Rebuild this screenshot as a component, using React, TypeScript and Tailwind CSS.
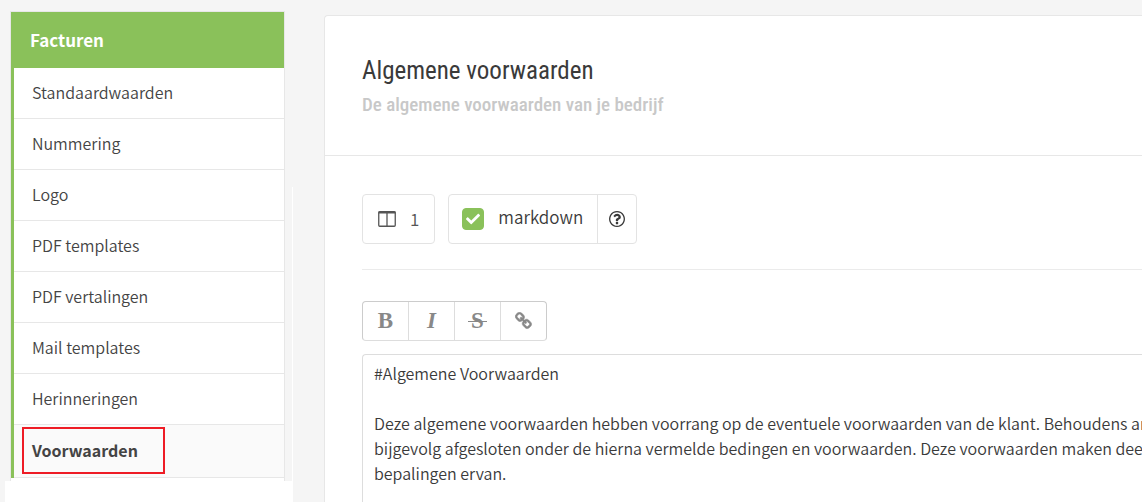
import React, { useState } from "react";
import { FaCheck } from "react-icons/fa";

const menuItems = [
  "Standaardwaarden",
  "Nummering",
  "Logo",
  "PDF templates",
  "PDF vertalingen",
  "Mail templates",
  "Herinneringen",
  "Voorwaarden",
];

const terms = `#Algemene Voorwaarden

Deze algemene voorwaarden hebben voorrang op de eventuele voorwaarden van de klant. Behoudens and
bijgevolg afgesloten onder de hierna vermelde bedingen en voorwaarden. Deze voorwaarden maken deel
bepalingen ervan.`;

const ColumnsIcon = () => (
  <svg viewBox="0 0 18 16" className="h-4 w-[18px]" aria-hidden="true">
    <rect x="0.75" y="0.75" width="16.5" height="14.5" rx="1" fill="none" stroke="currentColor" strokeWidth="1.3" />
    <path d="M0.5 0.5h17v2h-17z" fill="currentColor" />
    <path d="M9 2v13" stroke="currentColor" strokeWidth="1.3" />
  </svg>
);

const HelpIcon = () => (
  <svg viewBox="128 128 1536 1536" className="h-4 w-4" fill="currentColor" aria-hidden="true">
    <path d="M1008 1200v160q0 14-9 23t-23 9h-160q-14 0-23-9t-9-23v-160q0-14 9-23t23-9h160q14 0 23 9t9 23zm256-496q0 50-15 90t-45.5 69-52 44-59.5 36q-32 18-46.5 28t-26 24-11.5 29v32q0 14-9 23t-23 9h-160q-14 0-23-9t-9-23v-68q0-35 10.5-64.5t24-47.5 39-35.5 41-25.5 44.5-21q53-25 75-43t22-49q0-42-43.5-71.5t-95.5-29.5q-56 0-95 27-29 20-80 83-9 12-25 12-11 0-19-6l-108-82q-10-7-12-20t5-23q122-192 349-192 129 0 238.5 89.5t109.5 214.5zm-368-448q-130 0-248.5 51t-204 136.5-136.5 204-51 248.5 51 248.5 136.5 204 204 136.5 248.5 51 248.5-51 204-136.5 136.5-204 51-248.5-51-248.5-136.5-204-204-136.5-248.5-51zm768 640q0 209-103 385.5t-279.5 279.5-385.5 103-385.5-103-279.5-279.5-103-385.5 103-385.5 279.5-279.5 385.5-103 385.5 103 279.5 279.5 103 385.5z" />
  </svg>
);

const LinkIcon = () => (
  <svg
    viewBox="0 0 1792 1792"
    className="h-[18px] w-[18px]"
    fill="currentColor"
    stroke="currentColor"
    strokeWidth="60"
    aria-hidden="true"
  >
    <path d="M1456 1216q0-40-28-68l-208-208q-28-28-68-28-42 0-72 32 3 3 19 18.5t21.5 21.5 15 19 13 25.5 3.5 27.5q0 40-28 68t-68 28q-15 0-27.5-3.5t-25.5-13-19-15-21.5-21.5-18.5-19q-33 31-33 73 0 40 28 68l206 207q27 27 68 27 40 0 68-26l147-146q28-28 28-67zm-703-705q0-40-28-68l-206-207q-28-28-68-28-39 0-68 27l-147 146q-28 28-28 67 0 40 28 68l208 208q27 27 68 27 42 0 72-31-3-3-19-18.5t-21.5-21.5-15-19-13-25.5-3.5-27.5q0-40 28-68t68-28q15 0 27.5 3.5t25.5 13 19 15 21.5 21.5 18.5 19q33-31 33-73zm895 705q0 120-85 203l-147 146q-83 83-203 83-121 0-204-85l-206-207q-83-83-83-203 0-123 88-209l-88-88q-86 88-208 88-120 0-204-84l-208-208q-84-84-84-204t85-203l147-146q83-83 203-83 121 0 204 85l206 207q83 83 83 203 0 123-88 209l88 88q86-88 208-88 120 0 204 84l208 208q84 84 84 204z" />
  </svg>
);

const tools = [
  { label: "Bold", icon: <span>B</span> },
  { label: "Italic", icon: <span className="italic">I</span> },
  {
    label: "Strikethrough",
    icon: (
      <span className="relative">
        S
        <span className="absolute top-1/2 -right-[3px] -left-[3px] h-px bg-[#888]" />
      </span>
    ),
  },
  { label: "Link", icon: <LinkIcon /> },
];

const Sidebar = () => {
  const [active, setActive] = useState("Voorwaarden");

  return (
    <aside className="relative flex w-[293px] shrink-0 flex-col pt-[11px]">
      <div className="absolute top-[187px] right-0 bottom-0 w-px bg-white" />
      <nav className="mr-2 ml-[10px] border border-b-0 border-[#e7e7e7]">
        <h2 className="bg-[#8ac15a] px-[19px] py-4 text-[17px] leading-6 font-bold text-white">Facturen</h2>
        <ul className="border-l-3 border-[#8ac15a] bg-white">
          {menuItems.map((item) => (
            <li key={item} className="relative border-b border-[#e7e7e7]">
              <a
                href="#"
                onClick={() => setActive(item)}
                className={`block px-[18px] text-base leading-6 text-[#444] ${
                  active === item ? "bg-[#fafafa] pt-[13px] pb-[15px] font-bold" : "pt-3 pb-[14px] font-[350]"
                }`}
              >
                {item}
              </a>
              {active === item && (
                <div className="pointer-events-none absolute top-0.5 bottom-[3px] left-2 w-[143px] border-2 border-[#ee1c25]" />
              )}
            </li>
          ))}
        </ul>
        <div className="h-[3px] bg-white" />
      </nav>
      <div className="ml-[5px] grow bg-white" />
    </aside>
  );
};

const App = () => {
  const [markdown, setMarkdown] = useState(true);
  const [text, setText] = useState(terms);

  return (
    <div className="flex min-h-screen overflow-hidden bg-[#f5f5f5] font-['Noto_Sans_CJK_SC','Noto_Sans',sans-serif] text-[#3a3a3a]">
      <Sidebar />
      <main className="mt-[15px] ml-[31px] flex min-w-0 grow flex-col rounded-tl border-t border-l border-[#e7e7e7] bg-white">
        <header className="border-b border-[#e7e7e7] px-[37px] pt-[39px] pb-9 font-['Roboto_Condensed','Liberation_Sans_Narrow','Roboto',sans-serif]">
          <h1 className="text-[25px] leading-8">Algemene voorwaarden</h1>
          <p className="mt-1 text-[19px] leading-7 font-medium text-[#c8c8c8]">De algemene voorwaarden van je bedrijf</p>
        </header>

        <div className="flex grow flex-col pt-[38px] pl-[37px]">
          <div className="flex gap-[13px] border-b border-[#ebebeb] pb-[25px] text-[17px] font-[350]">
            <button className="flex h-[50px] items-center gap-[14px] rounded border border-[#e3e3e3] px-[15px] text-[#555]">
              <ColumnsIcon />1
            </button>
            <div className="flex h-[50px] rounded border border-[#e3e3e3]">
              <label className="flex items-center gap-[14px] pr-[14px] pl-[13px]">
                <span className="relative flex h-[22px] w-[22px] items-center justify-center">
                  <input
                    type="checkbox"
                    checked={markdown}
                    onChange={() => setMarkdown(!markdown)}
                    className="absolute inset-0 appearance-none rounded border border-[#8ac15a] checked:bg-[#8ac15a]"
                  />
                  {markdown && <FaCheck className="pointer-events-none relative h-[14px] w-[14px] text-white" />}
                </span>
                <span className="pb-1">markdown</span>
              </label>
              <button aria-label="Help" className="flex items-center border-l border-[#e3e3e3] px-[11px]">
                <HelpIcon />
              </button>
            </div>
          </div>

          <div className="mt-[31px] flex h-10 self-start rounded-sm border border-[#ccc] border-b-[#ddd] font-['Liberation_Serif',serif] text-[23px] leading-6 font-bold text-[#888]">
            {tools.map((tool) => (
              <button
                key={tool.label}
                aria-label={tool.label}
                className="flex w-[46px] items-center justify-center border-r border-[#ddd] last:w-[45px] last:border-r-0"
              >
                {tool.icon}
              </button>
            ))}
          </div>

          <textarea
            aria-label="Algemene voorwaarden"
            value={text}
            onChange={(e) => setText(e.target.value)}
            rows={5}
            wrap="off"
            className="mt-[13px] grow resize-none overflow-hidden rounded-tl border-t border-l border-[#ddd] px-[11px] pt-[6px] text-base leading-[25px] font-[350] outline-none"
          />
        </div>
      </main>
    </div>
  );
};

export default App;
